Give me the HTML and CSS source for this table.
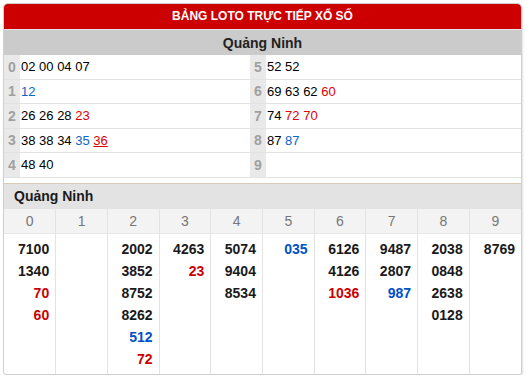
FILE: index.html
```html
<!DOCTYPE html>
<html lang="vi">
<head>
<meta charset="utf-8">
<title>Bảng loto trực tiếp xổ số</title>
<link rel="stylesheet" href="styles.css">
</head>
<body>
<div class="box">
  <div class="title">BẢNG LOTO TRỰC TIẾP XỔ SỐ</div>
  <div class="subtitle">Quảng Ninh</div>
  <table class="loto">
    <tr><td class="key">0</td><td class="val">02 00 04 07</td><td class="key">5</td><td class="val">52 52</td></tr>
    <tr><td class="key">1</td><td class="val"><span class="b">12</span></td><td class="key">6</td><td class="val">69 63 62 <span class="r">60</span></td></tr>
    <tr><td class="key">2</td><td class="val">26 26 28 <span class="r">23</span></td><td class="key">7</td><td class="val">74 <span class="r">72</span> <span class="r">70</span></td></tr>
    <tr><td class="key">3</td><td class="val">38 38 34 <span class="b">35</span> <span class="r u">36</span></td><td class="key">8</td><td class="val">87 <span class="b">87</span></td></tr>
    <tr><td class="key">4</td><td class="val">48 40</td><td class="key">9</td><td class="val"></td></tr>
  </table>
  <div class="gap"></div>
  <table class="dau">
    <tr><th class="name" colspan="10">Quảng Ninh</th></tr>
    <tr class="digits"><td>0</td><td>1</td><td>2</td><td>3</td><td>4</td><td>5</td><td>6</td><td>7</td><td>8</td><td>9</td></tr>
    <tr class="nums">
      <td>7100<br>1340<br><span class="r">70</span><br><span class="r">60</span></td>
      <td></td>
      <td>2002<br>3852<br>8752<br>8262<br><span class="b">512</span><br><span class="r">72</span></td>
      <td>4263<br><span class="r">23</span></td>
      <td>5074<br>9404<br>8534</td>
      <td><span class="b">035</span></td>
      <td>6126<br>4126<br><span class="r">1036</span></td>
      <td>9487<br>2807<br><span class="b">987</span></td>
      <td>2038<br>0848<br>2638<br>0128</td>
      <td>8769</td>
    </tr>
  </table>
</div>
</body>
</html>
```
FILE: styles.css
```css
html, body {
  margin: 0;
  padding: 0;
  background: #fff;
}
body {
  font-family: "Liberation Sans", Arial, sans-serif;
  color: #222;
}
.box {
  margin: 3px 5px 0 3px;
  border: 1px solid #cfcfcf;
  border-radius: 5px 5px 3px 3px;
  box-shadow: 1px 1px 2px rgba(0, 0, 0, 0.12);
  overflow: hidden;
}
.title {
  background: #cc0000;
  color: #fff;
  font-weight: bold;
  font-size: 12px;
  height: 25px;
  line-height: 25px;
  text-align: center;
  border-bottom: 1px solid #e4e4e4;
}
.subtitle {
  background: #cbcbcb;
  color: #222;
  font-weight: bold;
  font-size: 14px;
  height: 25px;
  line-height: 26px;
  text-align: center;
}
.loto {
  width: 100%;
  border-collapse: collapse;
  table-layout: fixed;
}
.loto td {
  height: 23.5px;
  padding: 0;
  border-bottom: 1px solid #e2e2e2;
  font-size: 13px;
  vertical-align: middle;
}
.loto td.key {
  width: 16px;
  background: #e9e9e9;
  color: #a0a0a0;
  font-weight: bold;
  font-size: 14px;
  text-align: center;
}
.loto td.val {
  padding-left: 1px;
  color: #000;
}
.loto td.val:nth-child(2) {
  width: 229px;
}
.r { color: #e00000; }
.b { color: #0b63cc; }
.u { text-decoration: underline; }
.gap {
  height: 5px;
}
.dau {
  width: 100%;
  border-collapse: collapse;
  table-layout: fixed;
  border-top: 1px solid #d9ccb2;
}
.dau th.name {
  background: #e3e3e3;
  color: #1a1a1a;
  font-size: 14px;
  font-weight: bold;
  text-align: left;
  height: 25px;
  padding: 0 0 0 10px;
  line-height: 25px;
}
.digits td {
  background: #f3f3f3;
  color: #777;
  font-size: 14px;
  text-align: center;
  height: 24px;
  padding: 0;
  border-left: 1px solid #e3e3e3;
  border-bottom: 1px solid #e8e8e8;
}
.digits td:first-child,
.nums td:first-child {
  border-left: none;
}
.nums td {
  vertical-align: top;
  text-align: right;
  font-size: 14px;
  font-weight: bold;
  line-height: 22px;
  padding: 4px 6px 4px 0;
  border-left: 1px solid #e3e3e3;
  color: #1a1a1a;
}
.nums .r { color: #cc0000; }
.nums .b { color: #0050c8; }
```
